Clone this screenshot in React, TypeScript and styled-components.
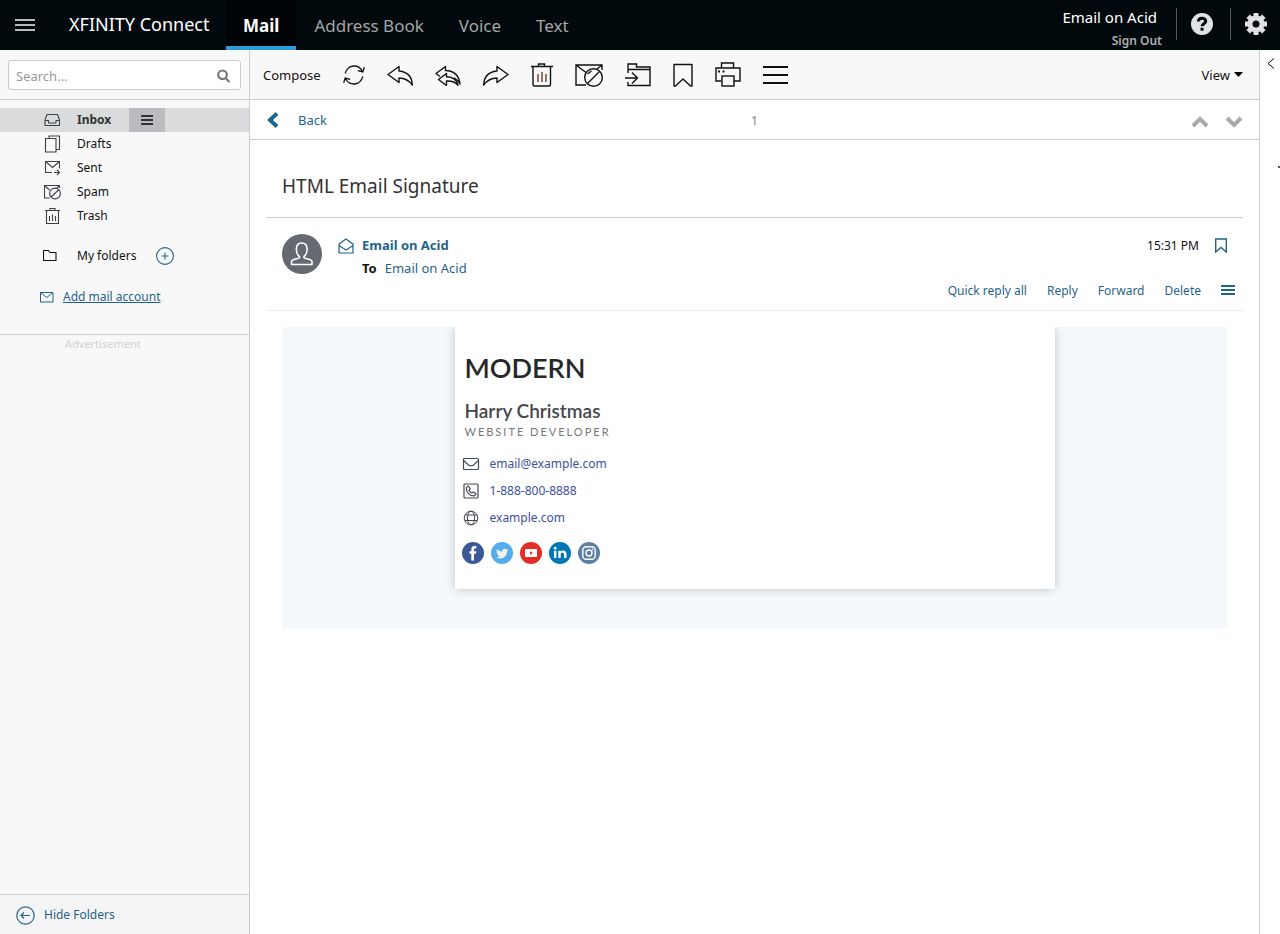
import React from 'react';
import styled, { createGlobalStyle, css } from 'styled-components';

const GlobalStyle = createGlobalStyle`
  * { box-sizing: border-box; }
  body {
    margin: 0;
    background: #fff;
    color: #111;
    font-family: 'Noto Sans', 'Open Sans', sans-serif;
    font-size: 13px;
    line-height: 20px;
  }
  a { color: inherit; text-decoration: none; }
  button {
    display: inline-flex;
    align-items: center;
    padding: 0;
    border: 0;
    background: none;
    color: inherit;
    font: inherit;
    cursor: pointer;
  }
  h1, h2, h3, p, ul, dl { margin: 0; padding: 0; }
  ul { list-style: none; }
  svg { display: block; flex: none; }
`;

const line = '#cccccc';
const blue = '#1f638a';

const Page = styled.div`
  display: flex;
  flex-direction: column;
  min-height: 100vh;
`;

/* Top bar */
const TopBar = styled.header`
  display: flex;
  align-items: stretch;
  height: 50px;
  background: #02090c;
  color: #fff;
`;

const MenuButton = styled.button`
  padding: 0 34px 0 15px;
  color: #b8bbbc;
`;

const Brand = styled.a`
  width: 157px;
  font-size: 18px;
  line-height: 49px;
  white-space: nowrap;
`;

const Tabs = styled.nav`
  display: flex;
  gap: 1px;
  flex: 1;
`;

const Tab = styled.a<{ $active?: boolean }>`
  padding: 0 17px;
  border-bottom: 4px solid transparent;
  color: #a3a6a7;
  font-size: 17px;
  line-height: 51px;
  white-space: nowrap;
  ${(p) =>
    p.$active &&
    css`
      border-color: #2b9cd8;
      background: #000408;
      color: #fff;
      font-weight: 700;
    `}
`;

const Account = styled.div`
  display: flex;
  flex-direction: column;
  align-items: flex-end;
  padding: 5px 14px 0 0;
`;

const AccountName = styled.span`
  padding-right: 5px;
  font-size: 15px;
  line-height: 24px;
`;

const SignOut = styled.a`
  color: #aeb0b1;
  font-size: 12px;
  font-weight: 600;
  line-height: 24px;
`;

const TopIcon = styled.button`
  align-self: center;
  height: 32px;
  margin-bottom: 2px;
  padding-left: 14px;
  border-left: 1px solid #53585a;
  color: #e2e2e2;
`;

const TopIcons = styled.div`
  display: flex;
  gap: 17px;
  padding-right: 13px;
`;

/* Page columns */
const Columns = styled.div`
  display: flex;
  flex: 1;
`;

const Sidebar = styled.aside`
  display: flex;
  flex-direction: column;
  width: 250px;
  flex: none;
  border-right: 1px solid ${line};
  background: #f8f8f8;
  font-size: 12px;
`;

const SearchArea = styled.form`
  height: 50px;
  padding: 10px 8px;
  border-bottom: 1px solid ${line};
`;

const SearchBox = styled.div`
  display: flex;
  align-items: center;
  height: 30px;
  padding: 2px 10px 0 7px;
  border: 1px solid ${line};
  border-radius: 3px;
  background: #fff;
  color: #777;
`;

const SearchInput = styled.input`
  flex: 1;
  min-width: 0;
  padding: 0;
  border: 0;
  outline: 0;
  background: none;
  font: inherit;
  font-size: 13px;
  &::placeholder { color: #999; opacity: 1; }
`;

const FolderList = styled.ul`
  padding-top: 8px;
`;

const FolderRow = styled.li<{ $active?: boolean }>`
  display: flex;
  align-items: center;
  height: 24px;
  padding-left: 43px;
  background: ${(p) => (p.$active ? '#dadbdc' : 'none')};
  color: ${(p) => (p.$active ? '#333' : '#111')};
  font-weight: ${(p) => (p.$active ? 700 : 400)};
`;

const FolderLink = styled.a`
  display: flex;
  align-items: center;
  gap: 16px;
  line-height: 24px;
  svg { color: #3c4248; }
`;

const FolderMenu = styled.button`
  justify-content: center;
  width: 36px;
  height: 24px;
  margin-left: 18px;
  background: #bbbbc0;
`;

const MyFolders = styled.div`
  display: flex;
  align-items: center;
  height: 24px;
  margin-top: 16px;
  padding-left: 43px;
`;

const AddFolder = styled.button`
  margin-left: 20px;
  color: ${blue};
`;

const AddAccount = styled.a`
  display: flex;
  align-items: center;
  gap: 9px;
  height: 24px;
  margin: 17px 0 25px;
  padding-left: 40px;
  color: ${blue};
  span { text-decoration: underline; }
`;

const Advertisement = styled.div`
  flex: 1;
  padding-left: 65px;
  border-top: 1px solid ${line};
  color: #d2d2d2;
  font-size: 11px;
  line-height: 18px;
`;

const HideFolders = styled.button`
  gap: 9px;
  height: 40px;
  padding: 1px 16px 0;
  border-top: 1px solid ${line};
  background: #f4f4f4;
  color: ${blue};
`;

const Main = styled.main`
  flex: 1;
  min-width: 0;
`;

const Toolbar = styled.div`
  display: flex;
  align-items: center;
  gap: 22px;
  height: 50px;
  padding: 0 16px 0 13px;
  border-bottom: 1px solid ${line};
  background: #f8f8f8;
`;

const ViewButton = styled.button`
  gap: 4px;
  margin-left: auto;
`;

const Pager = styled.div`
  display: grid;
  grid-template-columns: 1fr auto 1fr;
  align-items: center;
  height: 40px;
  padding: 0 16px;
  border-bottom: 1px solid ${line};
`;

const Back = styled.button`
  gap: 19px;
  justify-self: start;
  color: ${blue};
`;

const PageNumber = styled.span`
  color: #888;
`;

const PagerArrows = styled.div`
  display: flex;
  gap: 16px;
  justify-self: end;
  padding-top: 4px;
  color: #a9a9aa;
`;

const Subject = styled.h1`
  margin: 0 16px;
  padding: 31px 16px 15px;
  border-bottom: 1px solid ${line};
  color: #333;
  font-size: 19px;
  font-weight: 400;
  line-height: 31px;
`;

const MessageHead = styled.div`
  display: flex;
  height: 93px;
  margin: 0 16px;
  padding: 16px 8px 0 16px;
  border-bottom: 1px solid #ececec;
`;

const Avatar = styled.div`
  display: flex;
  align-items: center;
  justify-content: center;
  width: 40px;
  height: 40px;
  border-radius: 50%;
  background: #666a70;
  color: #fff;
`;

const Sender = styled.div`
  display: grid;
  grid-template-columns: 16px auto;
  column-gap: 8px;
  align-content: start;
  align-items: center;
  flex: 1;
  padding-left: 16px;
  line-height: 23px;
  color: ${blue};
`;

const SenderName = styled.a`
  font-weight: 700;
`;

const Recipient = styled.p`
  grid-column: 2;
  b { margin-right: 8px; color: #111; }
`;

const MessageSide = styled.div`
  display: flex;
  flex-direction: column;
  align-items: flex-end;
  gap: 22px;
  color: ${blue};
  font-size: 12px;
`;

const TimeRow = styled.div`
  display: flex;
  align-items: center;
  gap: 16px;
  height: 23px;
  padding-right: 8px;
  time { color: #111; }
`;

const Actions = styled.div`
  display: flex;
  align-items: center;
  gap: 20px;
  height: 23px;
`;

const MailBody = styled.article`
  margin: 16px 32px;
  padding-bottom: 40px;
  overflow: hidden;
  background: #f5f9fc;
`;

const Signature = styled.section`
  max-width: 600px;
  height: 262px;
  margin: 0 auto;
  padding: 24px 7px 0;
  background: #fff;
  box-shadow: 0 0 10px rgba(0, 0, 0, 0.22);
`;

const Logo = styled.h2`
  padding-left: 3px;
  color: #262828;
  font-family: Lato, sans-serif;
  font-size: 27px;
  font-weight: 600;
  line-height: 34px;
`;

const PersonName = styled.h3`
  margin-top: 14px;
  padding-left: 3px;
  color: #45484d;
  font-family: Lato, sans-serif;
  font-size: 19px;
  font-weight: 600;
  line-height: 24px;
`;

const JobTitle = styled.p`
  padding-left: 3px;
  color: #777;
  font-family: Lato, sans-serif;
  font-size: 11px;
  letter-spacing: 2px;
  line-height: 18px;
`;

const Contacts = styled.ul`
  display: grid;
  gap: 3px;
  padding-top: 11px;
  color: #3b50a0;
  font-size: 12px;
`;

const Contact = styled.li`
  display: grid;
  grid-template-columns: 18px auto;
  gap: 10px;
  align-items: center;
  height: 24px;
  svg { color: #444b54; justify-self: center; }
`;

const Socials = styled.ul`
  display: flex;
  gap: 7px;
  padding-top: 12px;
`;

const Rail = styled.aside`
  display: flex;
  flex-direction: column;
  align-items: center;
  gap: 97px;
  width: 21px;
  flex: none;
  padding: 8px 0 0 1px;
  border-left: 1px solid ${line};
`;

const RailMark = styled.span`
  align-self: flex-end;
  width: 2px;
  height: 2px;
  background: #555;
`;

/* Drawings */
type IconProps = {
  w: number;
  h: number;
  sw?: number;
  children: React.ReactNode;
};

const Icon = ({ w, h, sw = 1, children }: IconProps) => (
  <svg
    width={w}
    height={h}
    viewBox={`0 0 ${w} ${h}`}
    fill="none"
    stroke="currentColor"
    strokeWidth={sw}
    aria-hidden="true"
  >
    {children}
  </svg>
);

const toolbarItems = [
  {
    label: 'Refresh',
    icon: (
      <Icon w={22} h={20} sw={1.3}>
        <path d="M2.2 8.5C3.4 4 7 1 11 1c3.7 0 6.8 2 8.3 5.300M14.800 5.700l5 1.300L21.300 2.200M19.800 11.500C18.600 16 15 19 11 19c-3.700 0-6.800-2-8.300-5.300M7.200 14.300l-5-1.300L.7 17.800" />
      </Icon>
    ),
  },
  {
    label: 'Reply',
    icon: (
      <Icon w={26} h={22} sw={1.4}>
        <path strokeLinejoin="round" d="M1 10.500L12 2.500V7c8 .8 13 5.500 13.300 14C22 16.500 18 14 12 14v4.500z" />
      </Icon>
    ),
  },
  {
    label: 'Reply all',
    icon: (
      <Icon w={26} h={22} sw={1.4}>
        <path strokeLinejoin="round" d="M5 12.500L1 9.500 10.500 2.500V6.500c8 .3 13.500 4.500 14.500 13.500-1.500-3-3.500-5-6-6.200" />
        <path strokeLinejoin="round" d="M3.500 15.500L11.500 9.500v3.200c6 .2 10.500 3 11.500 8.500-3-3.500-6-4.500-11.500-4.200v4.500z" />
      </Icon>
    ),
  },
  {
    label: 'Forward',
    icon: (
      <Icon w={26} h={22} sw={1.4}>
        <path strokeLinejoin="round" d="M25 10.500L14 2.500V7C6 7.800 1 12.500 .7 21 4 16.500 8 14 14 14v4.500z" />
      </Icon>
    ),
  },
  {
    label: 'Delete message',
    icon: (
      <Icon w={22} h={24} sw={1.4}>
        <path d="M0 3.500h22M7.500 3.500V1h6v2.500M2 3.500v18q0 1.500 1.500 1.500h14.500q1.500 0 1.500-1.500v-18" />
        <path stroke="#6b3d24" d="M7 11v8M11 9v10M15 11v8" />
      </Icon>
    ),
  },
  {
    label: 'Mark as spam',
    icon: (
      <Icon w={28} h={24} sw={1.4}>
        <path d="M11 22H1V2h26V7M1 2l10 7.500M27 2l-5 4" />
        <circle cx="18.500" cy="14.500" r="8.800" />
        <path d="M12.500 20.500l12-12M12.500 11l4-3" />
      </Icon>
    ),
  },
  {
    label: 'Move to folder',
    icon: (
      <Icon w={26} h={24} sw={1.4}>
        <path d="M3 10V1h8.500v3H25V22.500H3V19M3 6.500h22M0 15h12M7 9.500l5.500 5.500L7 20.500" />
      </Icon>
    ),
  },
  {
    label: 'Bookmark',
    icon: (
      <Icon w={20} h={24} sw={1.4}>
        <path strokeLinejoin="round" d="M1 1.500h18V23h-1.500L10 16l-7.500 7H1z" />
      </Icon>
    ),
  },
  {
    label: 'Print',
    icon: (
      <Icon w={26} h={25} sw={1.4}>
        <path d="M6.500 6V1h12v5M6.500 19H1V6h24v13h-6.500" />
        <rect x="7" y="14" width="12" height="10" />
        <path strokeWidth="2" d="M3 9.500h2M7.500 9.500h2" />
      </Icon>
    ),
  },
  {
    label: 'More actions',
    icon: (
      <Icon w={25} h={20} sw={2}>
        <path d="M0 2h25M0 10h25M0 18h25" />
      </Icon>
    ),
  },
];

const folders = [
  {
    name: 'Inbox',
    icon: (
      <Icon w={18} h={14} sw={1.1}>
        <path strokeLinejoin="round" d="M2 7V12.500h14.500V7L14.500 1.500H4zM2 7.500h3.500v2q0 .5.5.5h6.500q.5 0 .5-.5v-2h3.500" />
      </Icon>
    ),
  },
  {
    name: 'Drafts',
    icon: (
      <Icon w={18} h={18} sw={1.1}>
        <path d="M2.500 3.500H13V17H2.500zM6 3V1h10.500v13.500h-3" />
      </Icon>
    ),
  },
  {
    name: 'Sent',
    icon: (
      <Icon w={18} h={16} sw={1.1}>
        <path d="M9 12.500H2.500V1.500h14v7M2.500 1.500l7 6 7-6M11 12.500h5.500M14 10l2.500 2.500L14 15" />
      </Icon>
    ),
  },
  {
    name: 'Spam',
    icon: (
      <Icon w={18} h={16} sw={1.1}>
        <path d="M6.500 14H1.500V1.500h15V4M1.500 1.500l5 4.500M16.500 1.500L14 4M8 13l8-7.500" />
        <circle cx="12" cy="9.500" r="5.400" />
      </Icon>
    ),
  },
  {
    name: 'Trash',
    icon: (
      <Icon w={18} h={18} sw={1.1}>
        <path d="M2 3.500h15M7 3.500v-2h5v2M3.500 3.500v13h12v-13M6.500 9v5M9.500 7.500V14M12.500 9v5" />
      </Icon>
    ),
  },
];

const contacts = [
  {
    text: 'email@example.com',
    href: 'mailto:email@example.com',
    icon: (
      <Icon w={18} h={14} sw={1.2}>
        <rect x="1.500" y="1.500" width="15" height="11" rx="1" />
        <path d="M1.500 3.500L6.500 8q2.500 1.500 5 0l5-4.500" />
      </Icon>
    ),
  },
  {
    text: '1-888-800-8888',
    href: 'tel:18888008888',
    icon: (
      <Icon w={16} h={16} sw={1.2}>
        <rect x="1" y="1" width="14" height="14" rx="1" />
        <path strokeLinejoin="round" d="M3.300 4.600L5.200 3l2 2.700-1.200 1.500c.5 1.200 1.500 2.200 2.800 2.800L10.300 9l2.700 1.800-1.500 2.100C7 13.300 3 9 3.300 4.600z" />
      </Icon>
    ),
  },
  {
    text: 'example.com',
    href: 'https://example.com',
    icon: (
      <Icon w={16} h={16}>
        <circle cx="8" cy="8" r="6.800" />
        <ellipse cx="8" cy="8" rx="3.600" ry="6.800" />
        <path d="M2 5h12M2 10.500h12" />
      </Icon>
    ),
  },
];

const socials = [
  {
    name: 'Facebook',
    color: '#3b5998',
    mark: <path fill="#fff" d="M9.300 18.500v-6.800H7.500V9.200h1.800V7.400c0-2.300 1.100-3.400 3.200-3.400h1.800v2.500h-1.200c-.8 0-1.100.3-1.100 1.100v1.600h2.300l-.3 2.500h-2v6.800z" />,
  },
  {
    name: 'Twitter',
    color: '#55acee',
    mark: <path fill="#f1f1f1" d="M17.200 7.700c-.5.2-.9.300-1.400.4.500-.3.900-.8 1.100-1.300-.5.300-1 .5-1.600.6a2.500 2.500 0 0 0-4.200 2.300C9 9.600 7.200 8.600 5.900 7.100c-.7 1.200-.3 2.600.8 3.300-.4 0-.8-.1-1.100-.3 0 1.200.8 2.200 2 2.500-.4.100-.7.100-1.100 0 .3 1 1.200 1.700 2.300 1.700-1 .8-2.300 1.200-3.600 1 4.800 3 10.900.2 10.800-6 .5-.4.900-.9 1.200-1.600z" />,
  },
  {
    name: 'YouTube',
    color: '#e52d27',
    mark: (
      <>
        <rect x="5" y="7" width="12" height="8" rx="1" fill="#fff" />
        <path fill="#e52d27" d="M10 9.300v3.400l3-1.700z" />
      </>
    ),
  },
  {
    name: 'LinkedIn',
    color: '#0077b5',
    mark: (
      <>
        <circle cx="6.200" cy="6.200" r="1.400" fill="#fff" />
        <path fill="#fff" d="M5 8.700h2.400V16H5zM9.300 8.700h2.300v1c1-1.800 5.900-2 5.900 2.300v4h-2.400v-3.600c0-2.300-3.400-2.200-3.400 0V16H9.300z" />
      </>
    ),
  },
  {
    name: 'Instagram',
    color: '#5b7fa6',
    mark: (
      <g fill="none" stroke="#fff" strokeWidth="1.400">
        <rect x="4.800" y="4.800" width="12.400" height="12.400" rx="3.500" />
        <circle cx="11" cy="11" r="3" />
        <path d="M14 7.500h1.200" />
      </g>
    ),
  },
];

const Envelope = () => (
  <Icon w={14} h={12}>
    <path d="M.5 1.500h12.500v9.500H.5zM.5 1.500l6.200 5 6.300-5" />
  </Icon>
);

export default function App() {
  return (
    <>
      <GlobalStyle />
      <Page>
        <TopBar>
          <MenuButton aria-label="Menu">
            <Icon w={20} h={14} sw={2}>
              <path d="M0 2h20M0 7h20M0 12h20" />
            </Icon>
          </MenuButton>
          <Brand href="#">XFINITY Connect</Brand>
          <Tabs>
            <Tab href="#" $active>Mail</Tab>
            <Tab href="#">Address Book</Tab>
            <Tab href="#">Voice</Tab>
            <Tab href="#">Text</Tab>
          </Tabs>
          <Account>
            <AccountName>Email on Acid</AccountName>
            <SignOut href="#">Sign Out</SignOut>
          </Account>
          <TopIcons>
            <TopIcon aria-label="Help">
              <svg width="22" height="22" viewBox="0 0 22 22" aria-hidden="true">
                <circle cx="11" cy="11" r="11" fill="currentColor" />
                <path d="M7.300 8.500C7.500 4.300 14.700 4.300 14.700 8.200c0 2.500-3.600 2.500-3.600 5" fill="none" stroke="#02090c" strokeWidth="3" />
                <path d="M9.500 14.800h3v2.900h-3z" fill="#02090c" />
              </svg>
            </TopIcon>
            <TopIcon aria-label="Settings">
              <svg width="22" height="22" viewBox="0 0 22 22" aria-hidden="true">
                <circle cx="11" cy="11" r="6" fill="none" stroke="currentColor" strokeWidth="5" />
                <g stroke="currentColor" strokeWidth="5">
                  <path d="M11 0v4M11 18v4M0 11h4M18 11h4M3.200 3.200l2.800 2.800M16 16l2.800 2.800M18.800 3.200L16 6M6 16l-2.800 2.800" />
                </g>
              </svg>
            </TopIcon>
          </TopIcons>
        </TopBar>

        <Columns>
          <Sidebar>
            <SearchArea>
              <SearchBox>
                <SearchInput type="search" placeholder="Search..." aria-label="Search" />
                <Icon w={13} h={14} sw={2.2}>
                  <circle cx="5.500" cy="5.800" r="4.300" />
                  <path d="M8.500 9l4 4" />
                </Icon>
              </SearchBox>
            </SearchArea>

            <FolderList>
              {folders.map((folder, index) => (
                <FolderRow key={folder.name} $active={index === 0}>
                  <FolderLink href="#">
                    {folder.icon}
                    {folder.name}
                  </FolderLink>
                  {index === 0 && (
                    <FolderMenu aria-label="Inbox options">
                      <Icon w={12} h={10} sw={2}>
                        <path d="M0 1h12M0 5h12M0 9h12" />
                      </Icon>
                    </FolderMenu>
                  )}
                </FolderRow>
              ))}
            </FolderList>

            <MyFolders>
              <FolderLink href="#">
                <Icon w={18} h={14} sw={1.1}>
                  <path stroke="#111" strokeLinejoin="round" d="M.5 1.500h5L7 3.500h6v8H.5z" />
                </Icon>
                My folders
              </FolderLink>
              <AddFolder aria-label="Add folder">
                <Icon w={18} h={18} sw={1.1}>
                  <circle cx="9" cy="9" r="8.400" />
                  <path d="M9 5.500v7M5.500 9h7" />
                </Icon>
              </AddFolder>
            </MyFolders>

            <AddAccount href="#">
              <Envelope />
              <span>Add mail account</span>
            </AddAccount>

            <Advertisement>Advertisement</Advertisement>

            <HideFolders>
              <Icon w={19} h={19} sw={1.2}>
                <circle cx="9.500" cy="9.500" r="8.700" />
                <path d="M5 9.500h9M8 6.500l-3 3 3 3" />
              </Icon>
              Hide Folders
            </HideFolders>
          </Sidebar>

          <Main>
            <Toolbar>
              <button>Compose</button>
              {toolbarItems.map((item) => (
                <button key={item.label} aria-label={item.label}>
                  {item.icon}
                </button>
              ))}
              <ViewButton>
                View
                <svg width="9" height="5" viewBox="0 0 9 5" aria-hidden="true">
                  <path d="M0 0h9L4.500 5z" />
                </svg>
              </ViewButton>
            </Toolbar>

            <Pager>
              <Back>
                <Icon w={13} h={16} sw={4}>
                  <path d="M11 1.500L4 8l7 6.500" />
                </Icon>
                Back
              </Back>
              <PageNumber>1</PageNumber>
              <PagerArrows>
                <button aria-label="Previous message">
                  <Icon w={18} h={12} sw={4}>
                    <path d="M2 10l7-7 7 7" />
                  </Icon>
                </button>
                <button aria-label="Next message">
                  <Icon w={18} h={12} sw={4}>
                    <path d="M2 2l7 7 7-7" />
                  </Icon>
                </button>
              </PagerArrows>
            </Pager>

            <Subject>HTML Email Signature</Subject>

            <MessageHead>
              <Avatar>
                <Icon w={24} h={26} sw={1.6}>
                  <path strokeLinejoin="round" d="M9.500 15.500C5.500 12.500 4.500 2 11.700 2s6.300 10.500 2.300 13.500v1.300c0 1.200 8 .7 8 3.700v3H1.500v-3c0-3 8-2.500 8-3.700z" />
                </Icon>
              </Avatar>
              <Sender>
                <Icon w={16} h={16} sw={1.2}>
                  <path strokeLinejoin="round" d="M1 6l7-5 7 5v9H1zM1 7.500L8 12l7-4.500" />
                </Icon>
                <SenderName href="#">Email on Acid</SenderName>
                <Recipient>
                  <b>To</b>
                  <a href="#">Email on Acid</a>
                </Recipient>
              </Sender>
              <MessageSide>
                <TimeRow>
                  <time>15:31 PM</time>
                  <button aria-label="Bookmark message">
                    <Icon w={12} h={15} sw={1.4}>
                      <path d="M.7 1h10.600v13L6 9.500.7 14z" />
                    </Icon>
                  </button>
                </TimeRow>
                <Actions>
                  <button>Quick reply all</button>
                  <button>Reply</button>
                  <button>Forward</button>
                  <button>Delete</button>
                  <button aria-label="More message actions">
                    <Icon w={14} h={14} sw={2}>
                      <path d="M0 2h14M0 6h14M0 10h14" />
                    </Icon>
                  </button>
                </Actions>
              </MessageSide>
            </MessageHead>

            <MailBody>
              <Signature>
                <Logo>MODERN</Logo>
                <PersonName>Harry Christmas</PersonName>
                <JobTitle>WEBSITE DEVELOPER</JobTitle>
                <Contacts>
                  {contacts.map((contact) => (
                    <Contact key={contact.text}>
                      {contact.icon}
                      <a href={contact.href}>{contact.text}</a>
                    </Contact>
                  ))}
                </Contacts>
                <Socials>
                  {socials.map((social) => (
                    <li key={social.name}>
                      <a href="#" aria-label={social.name}>
                        <svg width="22" height="22" viewBox="0 0 22 22" aria-hidden="true">
                          <circle cx="11" cy="11" r="11" fill={social.color} />
                          {social.mark}
                        </svg>
                      </a>
                    </li>
                  ))}
                </Socials>
              </Signature>
            </MailBody>
          </Main>

          <Rail>
            <button aria-label="Expand side panel">
              <Icon w={8} h={11}>
                <path d="M7 .5l-6 5 6 5" />
              </Icon>
            </button>
            <RailMark />
          </Rail>
        </Columns>
      </Page>
    </>
  );
}
